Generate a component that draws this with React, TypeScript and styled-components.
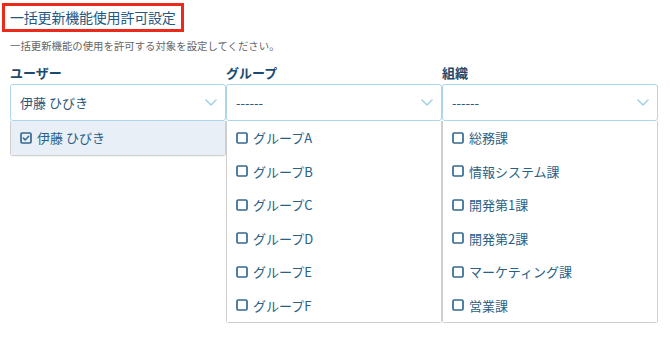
import React from "react";
import styled, { createGlobalStyle } from "styled-components";

const Global = createGlobalStyle`
  html, body { margin: 0; padding: 0; background: #fff; }
  body { font-family: "Noto Sans CJK JP", "Noto Sans", sans-serif; }
`;

const Page = styled.div`
  padding: 3px 12px 0 10px;
  width: 670px;
  box-sizing: border-box;
`;

const Title = styled.h1`
  display: inline-block;
  margin: 0 0 0 -8px;
  padding: 0 5px;
  border: 3px solid #ec2a1c;
  height: 23px;
  line-height: 23px;
  font-size: 14px;
  font-weight: 400;
  color: #1f5882;
  letter-spacing: -0.2px;
`;

const Description = styled.p`
  margin: 8px 0 0;
  font-size: 10.4px;
  line-height: 12px;
  color: #666;
`;

const Grid = styled.div`
  display: grid;
  grid-template-columns: repeat(3, 216px);
  margin-top: 13px;
`;

const Column = styled.div`
  display: flex;
  flex-direction: column;
`;

const Label = styled.div`
  font-size: 13px;
  font-weight: 700;
  line-height: 16px;
  color: #1c4a6e;
  margin-bottom: 3px;
`;

const Select = styled.div`
  box-sizing: border-box;
  height: 37px;
  border: 1px solid #acd6eb;
  border-radius: 3px;
  display: flex;
  align-items: center;
  justify-content: space-between;
  padding: 0 8px 0 9px;
  font-size: 13px;
  color: #2a5778;
`;

const List = styled.div`
  border: 1px solid #cfcfcf;
  border-top: none;
  border-radius: 0 0 3px 3px;
  box-shadow: 0 1px 1px rgba(0, 0, 0, 0.04);
`;

const Item = styled.div<{ $selected?: boolean }>`
  height: 33.5px;
  display: flex;
  align-items: center;
  gap: 5px;
  padding-left: 9px;
  font-size: 13px;
  color: #2a5f86;
  background: ${(p) => (p.$selected ? "#e8eff6" : "#fff")};
`;

const Chevron = () => (
  <svg width="12" height="7" viewBox="0 0 12 7" fill="none">
    <path d="M1 1l5 5 5-5" stroke="#a6d2e8" strokeWidth="1.6" strokeLinecap="round" strokeLinejoin="round" />
  </svg>
);

const Box = ({ checked }: { checked?: boolean }) => (
  <svg width="12" height="12" viewBox="0 0 12 12" fill="none">
    <rect x="1" y="1" width="10" height="10" rx="1.2" stroke="#346a91" strokeWidth="1.7" />
    {checked && (
      <path d="M3.4 6.1l1.8 1.8 3.5-3.6" stroke="#346a91" strokeWidth="1.5" strokeLinecap="round" strokeLinejoin="round" />
    )}
  </svg>
);

type Col = { label: string; value: string; items: string[]; selected?: string };

const columns: Col[] = [
  { label: "ユーザー", value: "伊藤 ひびき", items: ["伊藤 ひびき"], selected: "伊藤 ひびき" },
  { label: "グループ", value: "------", items: ["グループA", "グループB", "グループC", "グループD", "グループE", "グループF"] },
  { label: "組織", value: "------", items: ["総務課", "情報システム課", "開発第1課", "開発第2課", "マーケティング課", "営業課"] },
];

export default function App() {
  return (
    <Page>
      <Global />
      <Title>一括更新機能使用許可設定</Title>
      <Description>一括更新機能の使用を許可する対象を設定してください。</Description>
      <Grid>
        {columns.map((c) => (
          <Column key={c.label}>
            <Label>{c.label}</Label>
            <Select>
              <span>{c.value}</span>
              <Chevron />
            </Select>
            <List>
              {c.items.map((it) => (
                <Item key={it} $selected={it === c.selected}>
                  <Box checked={it === c.selected} />
                  <span>{it}</span>
                </Item>
              ))}
            </List>
          </Column>
        ))}
      </Grid>
    </Page>
  );
}
